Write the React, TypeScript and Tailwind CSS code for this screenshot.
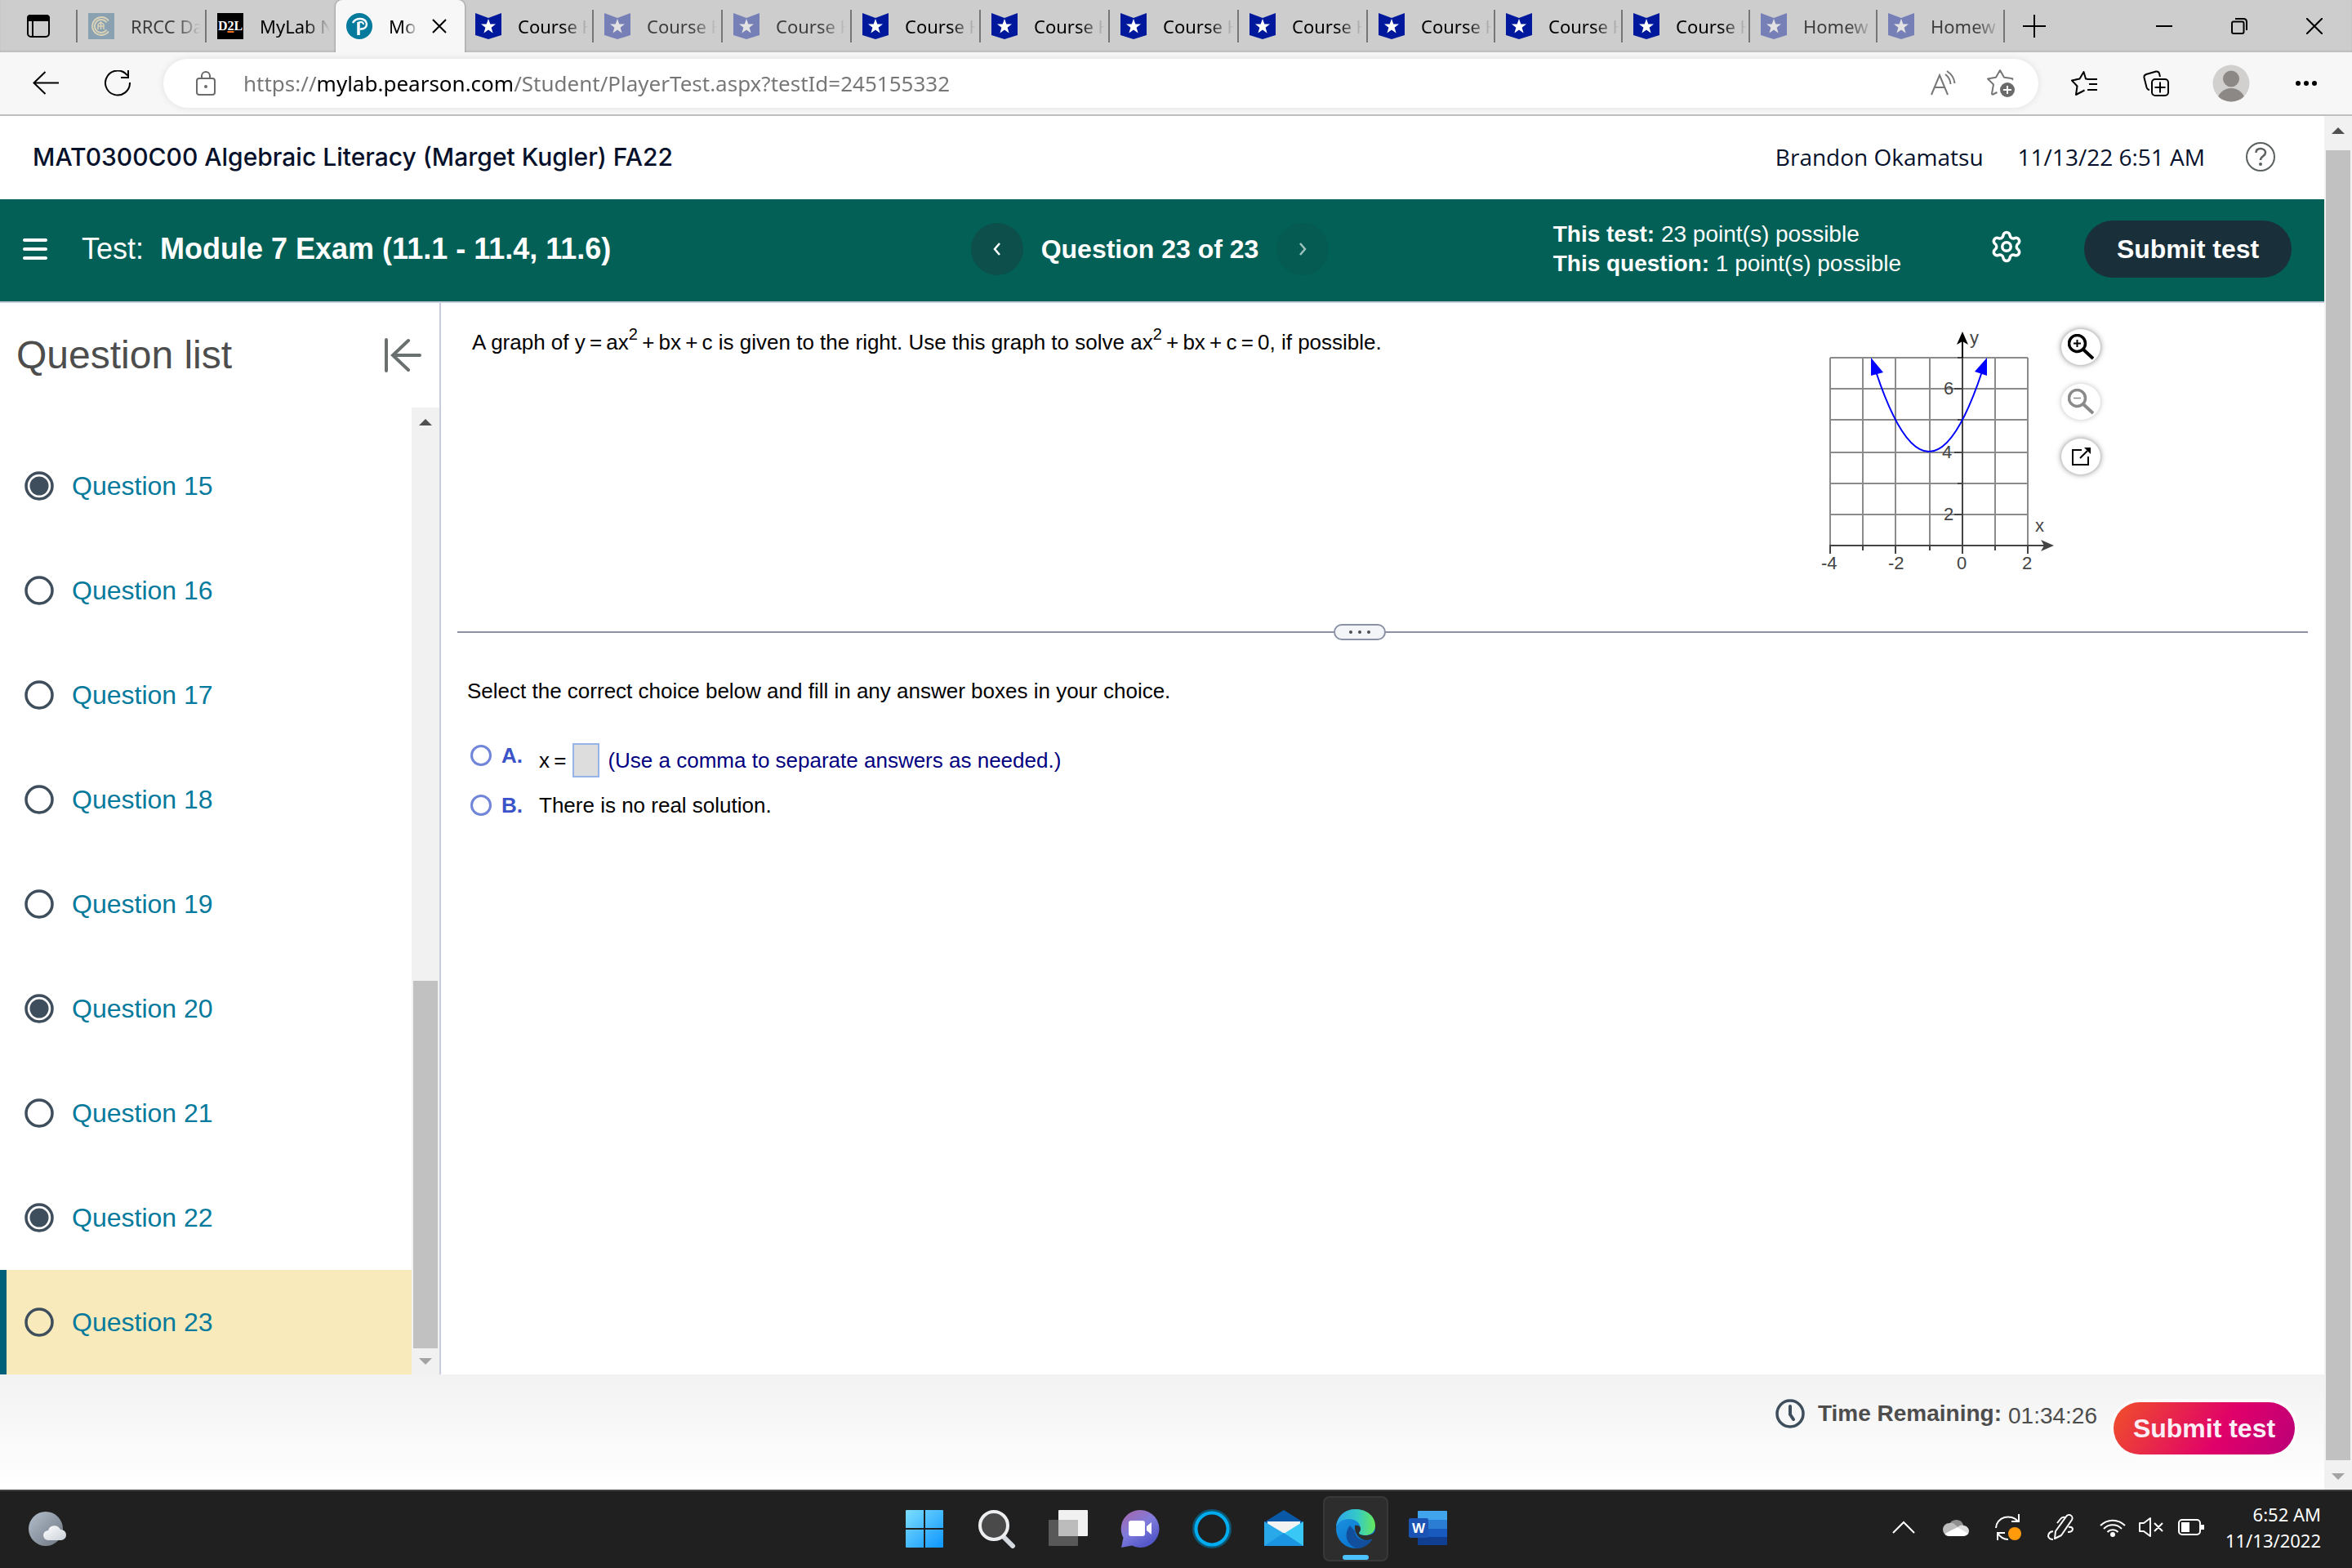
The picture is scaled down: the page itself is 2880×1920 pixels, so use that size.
import type { ReactNode } from 'react';
import { Settings } from 'lucide-react';

type Tab = { title: string; icon: 'rrcc' | 'd2l' | 'pearson' | 'shield'; asleep?: boolean; active?: boolean; narrow?: boolean };

const tabs: Tab[] = [
  { title: 'RRCC Da', icon: 'rrcc', asleep: true },
  { title: 'MyLab N', icon: 'd2l' },
  { title: 'Mo', icon: 'pearson', active: true },
  { title: 'Course H', icon: 'shield' },
  { title: 'Course H', icon: 'shield', asleep: true },
  { title: 'Course H', icon: 'shield', asleep: true },
  { title: 'Course H', icon: 'shield' },
  { title: 'Course H', icon: 'shield' },
  { title: 'Course H', icon: 'shield' },
  { title: 'Course H', icon: 'shield' },
  { title: 'Course H', icon: 'shield', narrow: true },
  { title: 'Course H', icon: 'shield', narrow: true },
  { title: 'Course H', icon: 'shield', narrow: true },
  { title: 'Homew', icon: 'shield', asleep: true, narrow: true },
  { title: 'Homew', icon: 'shield', asleep: true, narrow: true },
];

const questions = [
  { id: 15, answered: true },
  { id: 16, answered: false },
  { id: 17, answered: false },
  { id: 18, answered: false },
  { id: 19, answered: false },
  { id: 20, answered: true },
  { id: 21, answered: false },
  { id: 22, answered: true },
  { id: 23, answered: false },
];

function TabIcon({ icon }: { icon: Tab['icon'] }) {
  if (icon === 'rrcc') {
    return (
      <svg className="w-8 h-8 shrink-0" viewBox="0 0 32 32" fill="none" stroke="#f0dc96">
        <rect width="32" height="32" fill="#2f6690" stroke="none" />
        <path d="M25 9.500a11 11 0 1 0 0 13" strokeWidth="2" />
        <path d="M22.500 11.500a8 8 0 1 0 0 9" strokeWidth="2" />
        <path d="M12 20v-6l3.500-3 3.500 3v6M15.500 11v9M12 16h7" strokeWidth="1.500" />
      </svg>
    );
  }
  if (icon === 'd2l') {
    return (
      <span className="w-8 h-8 shrink-0 bg-black text-white font-['Liberation_Serif',serif] font-bold text-[16px] leading-8 text-center flex justify-center">
        D<span className="underline decoration-[#f47321] decoration-2">2</span>L
      </span>
    );
  }
  if (icon === 'pearson') {
    return (
      <svg className="w-8 h-8 shrink-0" viewBox="0 0 32 32" fill="none" stroke="#fff">
        <circle cx="16" cy="16" r="16" fill="#047a9c" stroke="none" />
        <path d="M8 12c2-4 6-5 9-5 5 0 8 3 8 6.500 0 4-4 6.500-8 6" strokeWidth="2.500" />
        <path d="M15 11v16" strokeWidth="3.500" />
        <path d="M15 11.500c4-1.500 6 0 6 2.500" strokeWidth="2" />
      </svg>
    );
  }
  return (
    <svg className="w-8 h-8 shrink-0" viewBox="0 0 32 32">
      <path d="M0 0l16 6L32 0v27l-16 5-16-5z" fill="#00189b" />
      <path d="M16 7l2.300 6.500h6.700l-5.400 4.200 2 6.800-5.600-4-5.600 4 2-6.800L7 13.500h6.700z" fill="#fff" />
    </svg>
  );
}

function BrowserTab({ tab, beforeActive }: { tab: Tab; beforeActive: boolean }) {
  const width = tab.narrow ? 'w-[156px]' : 'w-[158px]';
  if (tab.active) {
    return (
      <div role="tab" aria-selected="true" className={`${width} h-16 flex items-center pl-[13px] bg-[#f7f7f7] rounded-t-lg shadow-[0_0_3px_rgba(0,0,0,0.45)]`}>
        <TabIcon icon={tab.icon} />
        <span className="ml-5 w-9 whitespace-nowrap [mask-image:linear-gradient(to_right,#000_50%,transparent)]">{tab.title}</span>
        <button aria-label="Close tab" className="ml-4">
          <svg className="w-5 h-5" viewBox="0 0 20 20" fill="none" stroke="#000" strokeWidth="2">
            <path d="M2 2l16 16M18 2L2 18" />
          </svg>
        </button>
      </div>
    );
  }
  return (
    <div role="tab" aria-selected="false" className={`${width} h-16 flex items-center`}>
      <div className={`flex-1 flex items-center pl-[13px] ${tab.asleep ? 'opacity-70' : ''}`}>
        <span className={tab.asleep ? 'opacity-60' : ''}>
          <TabIcon icon={tab.icon} />
        </span>
        <span className="ml-5 w-[86px] overflow-hidden whitespace-nowrap [mask-image:linear-gradient(to_right,#000_65%,transparent)]">{tab.title}</span>
      </div>
      {!beforeActive && <span className="w-[2px] h-10 bg-[#767676]" />}
    </div>
  );
}

function BrowserChrome() {
  return (
    <header className="font-['Noto_Sans','Noto_Sans_CJK_SC',sans-serif]">
      <div className="h-16 flex items-center bg-[#cdcdcd] text-[22px] text-black overflow-hidden shadow-[inset_0_-2px_2px_#bdbdbd]">
        <button aria-label="Tab actions" className="mx-8">
          <svg className="w-[30px] h-[30px]" viewBox="0 0 30 30" fill="none" stroke="#000" strokeWidth="2">
            <rect x="2" y="2" width="26" height="26" rx="4" />
            <path d="M2 8V5q0-3 3-3h20q3 0 3 3v3z" fill="#000" />
            <path d="M8 8v20" />
          </svg>
        </button>
        <span className="w-[2px] h-10 -ml-px bg-[#767676]" />
        <div role="tablist" className="flex">
          {tabs.map((tab, i) => (
            <BrowserTab key={i} tab={tab} beforeActive={!!tabs[i + 1]?.active} />
          ))}
        </div>
        <button aria-label="New tab" className="ml-[22px]">
          <svg className="w-7 h-7" viewBox="0 0 28 28" fill="none" stroke="#000" strokeWidth="2">
            <path d="M14 0v28M0 14h28" />
          </svg>
        </button>
        <div className="ml-auto flex items-center gap-[72px] pr-9">
          <button aria-label="Minimize">
            <svg className="w-5 h-5" viewBox="0 0 20 20" stroke="#000" strokeWidth="2">
              <path d="M0 10h20" />
            </svg>
          </button>
          <button aria-label="Restore">
            <svg className="w-5 h-5" viewBox="0 0 20 20" fill="none" stroke="#000" strokeWidth="2">
              <rect x="1" y="4.500" width="14.500" height="14.500" rx="2" />
              <path d="M5 1h10q4 0 4 4v10" />
            </svg>
          </button>
          <button aria-label="Close">
            <svg className="w-5 h-5" viewBox="0 0 20 20" fill="none" stroke="#000" strokeWidth="2">
              <path d="M0 0l20 20M20 0L0 20" />
            </svg>
          </button>
        </div>
      </div>

      <div className="h-[78px] flex items-center bg-[#f7f7f7] border-b-2 border-[#bfbfbf] pl-10">
        <button aria-label="Back">
          <svg className="w-8 h-8" viewBox="0 0 32 32" fill="none" stroke="#000" strokeWidth="2">
            <path d="M15.500 2L1.500 15.500l14 13.500M1.500 15.500H32" />
          </svg>
        </button>
        <button aria-label="Refresh" className="ml-14">
          <svg className="w-8 h-8" viewBox="0 0 32 32" fill="none" stroke="#000" strokeWidth="2">
            <path d="M31 15a15 15 0 1 1-3-8.500" />
            <path d="M29 0v9h-9" />
          </svg>
        </button>
        <div className="ml-10 flex-1 h-[60px] flex items-center rounded-full bg-white pl-10 pr-7 shadow-[0_0_8px_rgba(0,0,0,0.1)]">
          <svg className="w-6 h-[30px] shrink-0" viewBox="0 0 24 30" fill="none" stroke="#6b6b6b" strokeWidth="2">
            <rect x="1" y="9" width="22" height="20" rx="3" />
            <path d="M7 9V6a5 5 0 0 1 10 0v3" />
            <circle cx="12" cy="19" r="2" fill="#6b6b6b" stroke="none" />
          </svg>
          <input
            aria-label="Address"
            readOnly
            value="https://mylab.pearson.com/Student/PlayerTest.aspx?testId=245155332"
            className="ml-[34px] flex-1 min-w-0 text-[26px] text-transparent bg-clip-text bg-[linear-gradient(to_right,#767676_0_90px,#000_90px_330px,#767676_330px)] outline-none"
          />
          <svg className="w-8 h-8 shrink-0" viewBox="0 0 32 32" fill="none" stroke="#767676" strokeWidth="2">
            <path d="M1 30L11 6l10 24M4.500 21h13M18 5c4 3 6 6 6.500 12M20 1c6 4 9 9 9.500 15" />
          </svg>
          <svg className="w-9 h-9 shrink-0 ml-9" viewBox="0 0 36 36" fill="none" stroke="#767676" strokeWidth="2">
            <path d="M32 14c1-2 0-2-1-2l-9-1.200L17 2l-5 8.800L2 12.500l7 7-2 11q0 1.500 1.500 1l5-2.500" strokeLinejoin="round" />
            <circle cx="26" cy="26" r="9" fill="#6b6b6b" stroke="none" />
            <path d="M26 21v10M21 26h10" stroke="#fff" />
          </svg>
        </div>
        <div className="flex items-center pl-10">
          <button aria-label="Favorites">
            <svg className="w-8 h-8" viewBox="0 0 32 32" fill="none" stroke="#000" strokeWidth="2">
              <path d="M21 11l-3-.500L15.500 2l-5 8.500L1 12.500l6.500 7L6 30l10.500-5.500" strokeLinejoin="round" />
              <path d="M20 11h12M22 17h10M20 24h12" />
            </svg>
          </button>
          <button aria-label="Collections" className="ml-14">
            <svg className="w-8 h-8" viewBox="0 0 32 32" fill="none" stroke="#000" strokeWidth="2">
              <rect x="11" y="11" width="20" height="20" rx="4" />
              <path d="M21 14.500v13M14.500 21h13M21 8l-1-4q-1-3-4-2.500L4 5Q1 6 1.500 9l3 12q1 3 3.500 3" />
            </svg>
          </button>
          <button aria-label="Profile" className="ml-[53px]">
            <svg className="w-[46px] h-[46px]" viewBox="0 0 46 46">
              <clipPath id="avatar">
                <circle cx="23" cy="23" r="22.500" />
              </clipPath>
              <circle cx="23" cy="23" r="22.500" fill="#d2d0ce" />
              <g clipPath="url(#avatar)" fill="#8c8886">
                <circle cx="23" cy="17.500" r="10" />
                <ellipse cx="23" cy="45" rx="17" ry="16" />
              </g>
            </svg>
          </button>
          <button aria-label="Settings and more" className="ml-[55px] mr-[42px]">
            <svg className="w-[28px] h-2" viewBox="0 0 28 8">
              <circle cx="4" cy="4" r="3" />
              <circle cx="14" cy="4" r="3" />
              <circle cx="24" cy="4" r="3" />
            </svg>
          </button>
        </div>
      </div>
    </header>
  );
}

function CourseHeader() {
  return (
    <div className="h-[102px] flex items-center pl-10 pr-[60px] pb-[2px] text-[#05112a] text-[28px] font-['Open_Sans',sans-serif]">
      <h1 className="text-[30px] font-medium font-['Inter',sans-serif]">MAT0300C00 Algebraic Literacy (Marget Kugler) FA22</h1>
      <span className="ml-auto">Brandon Okamatsu</span>
      <span className="ml-[42px]">11/13/22 6:51 AM</span>
      <button aria-label="Help" className="ml-[50px]">
        <svg className="w-9 h-9" viewBox="0 0 36 36" fill="none" stroke="#5a6060" strokeWidth="2">
          <circle cx="18" cy="18" r="17" />
          <path d="M12.500 13c0-3.500 2.500-5 5.500-5 3.500 0 6 2 6 5 0 4.500-6 4-6 9" strokeWidth="2.500" />
          <circle cx="18" cy="27" r="2" fill="#5a6060" stroke="none" />
        </svg>
      </button>
    </div>
  );
}

function TestBar() {
  return (
    <div className="h-[127px] flex items-center bg-[#036056] border-b-2 border-[#c7cddd] pl-[10px] pr-10 pb-[3px] text-white">
      <div className="flex-1 flex items-center">
        <button aria-label="Menu" className="ml-[18px]">
          <svg className="w-[30px] h-[26px]" viewBox="0 0 30 26" stroke="#fff" strokeWidth="4" strokeLinecap="round">
            <path d="M2 2h26M2 13h26M2 24h26" />
          </svg>
        </button>
        <h2 className="ml-[42px] text-[36px] whitespace-nowrap">
          Test:&nbsp; <span className="font-bold">Module 7 Exam (11.1 - 11.4, 11.6)</span>
        </h2>
      </div>
      <div className="flex items-center">
        <button aria-label="Previous question" className="w-16 h-16 rounded-full bg-[#0c4f4b] flex items-center justify-center">
          <svg className="w-4 h-4" viewBox="0 0 16 16" fill="none" stroke="#fff" strokeWidth="2.500">
            <path d="M11 1L5 8l6 7" />
          </svg>
        </button>
        <span className="mx-[22px] text-[32px] font-bold whitespace-nowrap">Question 23 of 23</span>
        <button aria-label="Next question" className="w-16 h-16 rounded-full bg-[#055b52] flex items-center justify-center">
          <svg className="w-4 h-4" viewBox="0 0 16 16" fill="none" stroke="#9fc2be" strokeWidth="2.500">
            <path d="M5 1l6 7-6 7" />
          </svg>
        </button>
      </div>
      <div className="flex-1 flex items-center justify-end">
        <div className="text-[28px] leading-9 whitespace-nowrap">
          <p><b>This test:</b> 23 point(s) possible</p>
          <p><b>This question:</b> 1 point(s) possible</p>
        </div>
        <button aria-label="Settings" className="ml-[108px] mb-[6px]">
          <Settings className="w-[42px] h-[42px]" strokeWidth={2} />
        </button>
        <button className="ml-[74px] w-[254px] h-[70px] rounded-full bg-[#19303a] text-[32px] font-bold">Submit test</button>
      </div>
    </div>
  );
}

function Arrow({ down, color }: { down?: boolean; color: string }) {
  return (
    <svg className="w-4 h-2" viewBox="0 0 16 8" fill={color}>
      {down ? <path d="M0 0h16L8 8z" /> : <path d="M0 8h16L8 0z" />}
    </svg>
  );
}

function QuestionList() {
  return (
    <nav aria-label="Question list" className="w-[540px] shrink-0 flex flex-col border-r-2 border-[#c7cddd]">
      <div className="h-32 flex items-center justify-between pl-5 pr-[22px]">
        <h3 className="text-[48px] text-[#4d4d4d]">Question list</h3>
        <button aria-label="Collapse question list">
          <svg className="w-[46px] h-11" viewBox="0 0 46 44" fill="none" stroke="#6a7070" strokeWidth="4" strokeLinecap="round">
            <path d="M3 3v38M30 4L11 22l19 18M12 22h32" />
          </svg>
        </button>
      </div>
      <div className="flex-1 flex">
        <ul className="flex-1 pt-8">
          {questions.map((q) => (
            <li key={q.id}>
              <a
                href={`#question-${q.id}`}
                className={`h-32 flex items-center gap-[22px] border-l-8 pl-[22px] text-[32px] text-[#047a9c] ${q.id === 23 ? 'bg-[#f9eabb] border-[#00607a]' : 'border-transparent'}`}
              >
                <svg className="w-9 h-9" viewBox="0 0 36 36">
                  <circle cx="18" cy="18" r="16" fill="none" stroke="#3f4e5c" strokeWidth="3.500" />
                  {q.answered && <circle cx="18" cy="18" r="11.500" fill="#3f4e5c" />}
                </svg>
                Question {q.id}
              </a>
            </li>
          ))}
        </ul>
        <div className="w-[34px] bg-[#f1f1f1] flex flex-col items-center justify-between pt-[14px] pb-3">
          <Arrow color="#505050" />
          <div className="flex-1 w-[30px] mb-3 flex flex-col justify-end">
            <div className="h-[38%] min-h-[450px] bg-[#c1c1c1]" />
          </div>
          <Arrow down color="#a3a3a3" />
        </div>
      </div>
    </nav>
  );
}

function Graph() {
  return (
    <svg className="w-[290px] h-[300px]" viewBox="0 0 290 300" fill="none">
      <g stroke="#8b8b8b" strokeWidth="2">
        {[11, 51, 91, 133, 213, 253].map((x) => (
          <path key={x} d={`M${x} 38V268`} />
        ))}
        {[38, 76, 114, 154, 192, 230].map((y) => (
          <path key={y} d={`M11 ${y}H253`} />
        ))}
      </g>
      <g stroke="#444" strokeWidth="2">
        <path d="M173 20V278M10 268h264M11 268v10M51 268v6M91 268v10M133 268v6M213 268v6M253 268v10" />
        <path d="M167 38h6M163 76h10M167 114h6M163 154h10M167 192h6M163 230h10" />
      </g>
      <path d="M173 6l7 16-7-4-7 4z" fill="#000" />
      <path d="M173 18v20" stroke="#000" strokeWidth="2" />
      <path d="M285 268l-16 7 4-7-4-7z" fill="#444" />
      <path d="M67 55Q132 251 197 55" stroke="#00f" strokeWidth="2" />
      <path d="M61 38l15 18-15 4zM203 38v22l-15-5z" fill="#00f" />
      <g fill="#444" fontSize="22" fontFamily="Liberation Sans, Arial, sans-serif">
        <text x="150" y="83">6</text>
        <text x="148" y="161">4</text>
        <text x="150" y="237">2</text>
        <text x="0" y="297">-4</text>
        <text x="82" y="297">-2</text>
        <text x="166" y="297">0</text>
        <text x="246" y="297">2</text>
        <text x="182" y="21">y</text>
        <text x="262" y="251">x</text>
      </g>
    </svg>
  );
}

function RoundTool({ label, disabled, children }: { label: string; disabled?: boolean; children: ReactNode }) {
  return (
    <button
      aria-label={label}
      disabled={disabled}
      className={`w-12 h-11 rounded-[50%] bg-white flex items-center justify-center ${disabled ? 'shadow-[0_0_6px_rgba(0,0,0,0.25)]' : 'shadow-[0_0_7px_rgba(0,0,0,0.5)]'}`}
    >
      <svg className="w-8 h-8" viewBox="0 0 32 32" fill="none" stroke={disabled ? '#8a8a8a' : '#000'}>
        {children}
      </svg>
    </button>
  );
}

function QuestionArea() {
  return (
    <main className="flex-1 px-5 text-[26px] leading-8 text-black">
      <div className="h-[402px] flex justify-between pl-[18px] pr-[254px]">
        <p className="pt-8">
          A graph of y&#8201;=&#8201;ax<sup className="text-[20px] -top-3">2</sup>&#8201;+&#8201;bx&#8201;+&#8201;c is given to the right. Use this graph to solve ax<sup className="text-[20px] -top-3">2</sup>&#8201;+&#8201;bx&#8201;+&#8201;c&#8201;=&#8201;0, if possible.
        </p>
        <div className="flex gap-1 pt-[29px]">
          <Graph />
          <div className="flex flex-col gap-[23px] pt-[3px]">
            <RoundTool label="Zoom in">
              <circle cx="11.500" cy="11.500" r="10" strokeWidth="3.500" />
              <path d="M19 19l12 11" strokeWidth="4" />
              <path d="M11.500 7v9M7 11.500h9" strokeWidth="2" />
            </RoundTool>
            <RoundTool label="Zoom out" disabled>
              <circle cx="11.500" cy="11.500" r="10" strokeWidth="3.500" />
              <path d="M19 19l12 11" strokeWidth="4" />
              <path d="M7 11.500h9" strokeWidth="1.500" />
            </RoundTool>
            <RoundTool label="Open in new window">
              <path d="M17 8H6v18h19V16" strokeWidth="2" />
              <path d="M15 18L24 9" strokeWidth="2" />
              <path d="M20 5h8v8z" fill="#000" stroke="none" />
            </RoundTool>
          </div>
        </div>
      </div>

      <div className="flex items-center h-[2px] pr-14 bg-[#8c92a6]">
        <button aria-label="Resize panes" className="mx-auto w-16 h-5 rounded-full border-2 border-[#8c92a6] bg-[#f4f5f9] flex items-center justify-center gap-[7px]">
          <span className="w-1 h-1 rounded-full bg-[#4d4d4d]" />
          <span className="w-1 h-1 rounded-full bg-[#4d4d4d]" />
          <span className="w-1 h-1 rounded-full bg-[#4d4d4d]" />
        </button>
      </div>

      <fieldset aria-labelledby="choices" className="pl-3 pt-[55px]">
        <p id="choices">Select the correct choice below and fill in any answer boxes in your choice.</p>
        <div className="mt-12 ml-1 flex items-start">
          <label className="h-[30px] w-[84px] flex items-center gap-3 font-bold text-[#3b53c8]">
            <input type="radio" name="choice" className="appearance-none w-[26px] h-[26px] rounded-full border-3 border-[#7186d9] bg-white" />
            A.
          </label>
          <div className="h-[42px] flex items-center">
            <label htmlFor="answer">x&#8201;=</label>
            <input id="answer" type="text" className="ml-2 mr-[10px] w-[33px] h-[42px] border-2 border-[#97b4e8] bg-[#dddddd]" />
            <span className="text-[#000080]">(Use a comma to separate answers as needed.)</span>
          </div>
        </div>
        <label className="mt-[18px] ml-1 flex items-center">
          <span className="w-[84px] flex items-center gap-3 font-bold text-[#3b53c8]">
            <input type="radio" name="choice" className="appearance-none w-[26px] h-[26px] rounded-full border-3 border-[#7186d9] bg-white" />
            B.
          </span>
          There is no real solution.
        </label>
      </fieldset>
    </main>
  );
}

function TestFooter() {
  return (
    <footer className="h-[141px] flex items-start justify-end pt-[30px] pr-9 text-[28px] leading-9 text-[#4d4d4d] bg-linear-to-b from-[#f2f2f2] to-white">
      <svg className="w-9 h-9" viewBox="0 0 36 36" fill="none" stroke="#3f4e5c" strokeLinecap="round">
        <circle cx="18" cy="18" r="16" strokeWidth="3.500" />
        <path d="M18 9v10l4 6" strokeWidth="4" />
      </svg>
      <b className="ml-4">Time Remaining:</b>
      <span className="ml-2 pt-[3px]">01:34:26</span>
      <button className="ml-5 mt-1 w-[222px] h-16 rounded-full text-[32px] font-bold text-[#fbeef6] bg-[linear-gradient(120deg,#f0502a_0%,#e0006a_60%,#ba0078_100%)] shadow-[0_0_0_4px_rgba(255,255,255,0.6)]">
        Submit test
      </button>
    </footer>
  );
}

function TaskButton({ label, active, children }: { label: string; active?: boolean; children: ReactNode }) {
  return (
    <button aria-label={label} className={`relative w-20 h-20 rounded-lg flex items-center justify-center ${active ? 'bg-[#2d2d2d] border-2 border-[#383838]' : ''}`}>
      <svg className="w-12 h-12" viewBox="0 0 48 48" fill="none">
        {children}
      </svg>
      {active && <span className="absolute bottom-0 w-8 h-[6px] rounded-full bg-[#4cc2ff]" />}
    </button>
  );
}

function Taskbar() {
  return (
    <div className="h-24 grid grid-cols-[1fr_auto_1fr] items-center bg-[#202020] border-t-2 border-[#3f3f3f] pb-[2px] text-white font-['Noto_Sans','Noto_Sans_CJK_SC',sans-serif]">
      <button aria-label="Weather" className="ml-[34px] justify-self-start">
        <svg className="w-12 h-11" viewBox="0 0 48 44">
          <defs>
            <linearGradient id="moon" x1="0" y1="0" x2="1" y2="1">
              <stop stopColor="#b4bfcd" />
              <stop offset="1" stopColor="#6c7580" />
            </linearGradient>
            <linearGradient id="cloud" x1="0" y1="0" x2="1" y2="1">
              <stop stopColor="#fff" />
              <stop offset="1" stopColor="#c9d0d8" />
            </linearGradient>
          </defs>
          <circle cx="22" cy="22" r="21" fill="url(#moon)" />
          <path d="M25 36a6 6 0 0 1 0-12 8 8 0 0 1 15-1 6.500 6.500 0 0 1 1 13z" fill="url(#cloud)" />
        </svg>
      </button>

      <div className="flex gap-2">
        <TaskButton label="Start">
          <linearGradient id="win" x1="0" y1="0" x2="48" y2="48" gradientUnits="userSpaceOnUse">
            <stop stopColor="#7fe0ff" />
            <stop offset="1" stopColor="#0a94ff" />
          </linearGradient>
          <path d="M1 2q0-1 1-1h21v22H1zM25 1h21q1 0 1 1v21H25zM1 25h22v22H2q-1 0-1-1zM25 25h22v21q0 1-1 1H25z" fill="url(#win)" />
        </TaskButton>
        <TaskButton label="Search">
          <path d="M33 34l11 11" stroke="#d5d9e0" strokeWidth="6" strokeLinecap="round" />
          <circle cx="21" cy="20" r="17" fill="#4a4a4a" stroke="#eceef0" strokeWidth="4" />
        </TaskButton>
        <TaskButton label="Task view">
          <rect x="12" y="1" width="36" height="32" rx="1" fill="#f1f1f1" />
          <rect x="0" y="13" width="36" height="32" rx="1" fill="#6b6b6b" fillOpacity="0.75" />
          <path d="M12 13h24v20H12z" fill="#bcbcbc" />
        </TaskButton>
        <TaskButton label="Chat">
          <linearGradient id="chat" x1="6" y1="6" x2="30" y2="44" gradientUnits="userSpaceOnUse">
            <stop stopColor="#a06ab4" />
            <stop offset="0.500" stopColor="#7f7cdc" />
            <stop offset="1" stopColor="#5558c9" />
          </linearGradient>
          <path d="M24 1a23 23 0 1 1-10 43.500L1 47l2.500-12A23 23 0 0 1 24 1z" fill="url(#chat)" />
          <rect x="10" y="14" width="20" height="19" rx="3" fill="#fff" />
          <path d="M32 21l6-5v15l-6-5z" fill="#fff" />
        </TaskButton>
        <TaskButton label="Cortana">
          <circle cx="24" cy="24" r="22.500" stroke="#0e5672" strokeWidth="3" />
          <circle cx="24" cy="24" r="19.500" stroke="#00adf0" strokeWidth="4" />
        </TaskButton>
        <TaskButton label="Mail">
          <path d="M0 16L24 1l24 15v10H0z" fill="#0a58a8" />
          <path d="M4 15h40v10L24 36 4 25z" fill="#f3f3f3" />
          <path d="M0 15l48 29v1H0z" fill="#2aa9ea" />
          <path d="M48 15v30L24 30z" fill="#39c8f5" />
          <path d="M0 45l24-16 24 16z" fill="#1a94e0" />
        </TaskButton>
        <TaskButton label="Microsoft Edge" active>
          <linearGradient id="edgeTop" x1="0" y1="20" x2="48" y2="20" gradientUnits="userSpaceOnUse">
            <stop stopColor="#2ba6ea" />
            <stop offset="0.550" stopColor="#35c9c6" />
            <stop offset="1" stopColor="#66e85a" />
          </linearGradient>
          <linearGradient id="edgeLeft" x1="0" y1="14" x2="24" y2="48" gradientUnits="userSpaceOnUse">
            <stop stopColor="#1b8fdd" />
            <stop offset="1" stopColor="#0675cf" />
          </linearGradient>
          <circle cx="24" cy="24" r="24" fill="url(#edgeLeft)" />
          <path d="M17 20c-8 10-5 24 9 28 8 0 14-5 18-11-8 3-20 1-21-10z" fill="#114f9c" />
          <path d="M0 22C1 8 11 0 24 0c14 0 24 9 24 20 0 7-5 12-12 12-5 0-8-1-8-3 0-1 2-2 2-5 0-7-6-12-14-12C8 12 2 16 0 22z" fill="url(#edgeTop)" />
          <path d="M23 20c-1 10 6 18 15 18 3 0 6-2 7-1 0 1 1 0 3-5v-8c0 6-6 8-12 8-5 0-8-1-8-3 0-1 2-2 2-5 0-3-3-5-7-4z" fill="#2d2d2d" />
        </TaskButton>
        <TaskButton label="Word">
          <path d="M12 3q0-1 1-1h34q1 0 1 1v10H12z" fill="#41a5ee" />
          <path d="M12 13h36v11H12z" fill="#2b7cd3" />
          <path d="M12 24h36v10H12z" fill="#185abd" />
          <path d="M12 34h36v9q0 1-1 1H13q-1 0-1-1z" fill="#103f91" />
          <rect x="1" y="11" width="24" height="24" rx="2" fill="#1a53b4" />
          <text x="13" y="29" textAnchor="middle" fontSize="17" fontWeight="700" fontFamily="Liberation Sans, Arial, sans-serif" fill="#fff">W</text>
        </TaskButton>
      </div>

      <div className="justify-self-end flex items-center pr-[38px] pb-1">
        <button aria-label="Show hidden icons">
          <svg className="w-7 h-8" viewBox="0 0 28 32" fill="none" stroke="#fff" strokeWidth="2">
            <path d="M1 23l13-13 13 13" />
          </svg>
        </button>
        <svg className="w-8 h-8 ml-[34px]" viewBox="0 0 32 32">
          <path d="M8 13a9 9 0 0 1 17 0l-2 6-10-3z" fill="#8f8f8f" />
          <path d="M8 27A8 8 0 0 1 8 11c6-1 7 3 12 6L2 24z" fill="#bdbdbd" />
          <path d="M17 18a8 8 0 0 1 15 2q0 5-3 5z" fill="#dedede" />
          <path d="M2 24l16-8 13 8q-2 3-5 3H7q-3 0-5-3z" fill="#fff" />
        </svg>
        <svg className="w-8 h-8 ml-8" viewBox="0 0 32 32" fill="none" stroke="#fff" strokeWidth="2">
          <path d="M1 17A15 14 0 0 1 28 9M29 0v9h-9M12 23H3v9M3 23c3 5 7 8 13 8" />
          <circle cx="24" cy="24" r="8" fill="#ff9a0a" stroke="none" />
        </svg>
        <svg className="w-8 h-8 ml-8" viewBox="0 0 32 32" fill="none" stroke="#fff" strokeWidth="2" strokeLinejoin="round">
          <path d="M9 30l1-9L23 3a4 4 0 0 1 7 4L17 26zM22 4q-4-1-6 2l-4 5M26 16q4-1 5 2 0 4-6 4M7 21q-6 1-6 6 1 4 6 4" />
        </svg>
        <svg className="w-8 h-8 ml-8" viewBox="0 0 32 32" fill="none" stroke="#fff" strokeWidth="2">
          <path d="M1 14a21 21 0 0 1 30 0M5 18a15 15 0 0 1 22 0M9.500 22a9 9 0 0 1 13 0" />
          <circle cx="16" cy="25" r="3" fill="#fff" stroke="none" />
        </svg>
        <svg className="w-8 h-8 ml-4" viewBox="0 0 32 32" fill="none" stroke="#fff" strokeWidth="2" strokeLinejoin="round">
          <path d="M1 11h5l8-6v22l-8-6H1zM19 11l10 10M29 11L19 21" />
        </svg>
        <svg className="w-8 h-8 ml-4" viewBox="0 0 32 32" fill="none" stroke="#fff" strokeWidth="2">
          <rect x="1" y="7" width="26" height="18" rx="4" />
          <path d="M4 10h10v12H4z" fill="#fff" stroke="none" />
          <path d="M30 13v6" strokeWidth="4" />
        </svg>
        <div className="ml-[26px] text-right text-[22px] leading-8">
          <p>6:52 AM</p>
          <p>11/13/2022</p>
        </div>
      </div>
    </div>
  );
}

export default function App() {
  return (
    <div className="min-h-screen flex flex-col bg-white font-['Liberation_Sans',Arial,sans-serif]">
      <BrowserChrome />
      <div className="flex-1 flex">
        <div className="flex-1 min-w-0 flex flex-col">
          <CourseHeader />
          <TestBar />
          <div className="flex-1 flex">
            <QuestionList />
            <QuestionArea />
          </div>
          <TestFooter />
        </div>
        {/* Page scrollbar */}
        <div className="w-[34px] shrink-0 bg-[#f1f1f1] flex flex-col items-center pt-[14px] pb-3">
          <Arrow color="#505050" />
          <div className="flex-1 w-[30px] mt-5 mb-4 bg-[#c1c1c1]" />
          <Arrow down color="#a3a3a3" />
        </div>
      </div>
      <Taskbar />
    </div>
  );
}
